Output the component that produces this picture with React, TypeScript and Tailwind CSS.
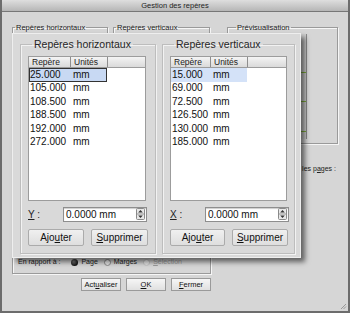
import React from "react";

const FONT = "font-['Liberation_Sans',Arial,sans-serif]";

const hRows = ["25.000", "105.000", "108.500", "188.500", "192.000", "272.000"];
const vRows = ["15.000", "69.000", "72.500", "126.500", "130.000", "185.000"];

function Spinner() {
  return (
    <svg width="9" height="12" viewBox="0 0 9 12" className="shrink-0">
      <rect x="0.5" y="0.5" width="8" height="11" rx="1" fill="#e8e8e8" stroke="#8a8a8a" />
      <line x1="1" y1="6" x2="8" y2="6" stroke="#9a9a9a" />
      <path d="M2.2 4.6 L4.5 2 L6.8 4.6 Z" fill="#333" />
      <path d="M2.2 7.4 L4.5 10 L6.8 7.4 Z" fill="#333" />
    </svg>
  );
}

function GuideList({
  rows,
  cols,
  focused,
}: {
  rows: string[];
  cols: [number, number, number];
  focused: boolean;
}) {
  const total = cols[0] + cols[1] + cols[2];
  return (
    <div className="flex flex-col" style={{ width: total }}>
      <div className="flex h-[12px] border border-[#9c9c9c] bg-gradient-to-b from-[#f4f4f4] to-[#dadada] text-[8.5px] leading-[10px] text-[#222]">
        <div className="border-r border-[#8e8e8e] pl-[3px]" style={{ width: cols[0] }}>
          Repère
        </div>
        <div className="border-r border-[#8e8e8e] pl-[3px]" style={{ width: cols[1] }}>
          Unités
        </div>
        <div className="flex-1" />
      </div>
      <div className="h-[133px] border-x border-b border-[#9c9c9c] bg-white text-[10px] text-[#111]">
        {rows.map((r, i) => {
          const sel = i === 0;
          return (
            <div key={r} className="flex h-[13.5px] items-center leading-[12px]">
              <div
                className={
                  sel
                    ? focused
                      ? "flex h-full items-center bg-[#c8d9f3] outline outline-1 -outline-offset-1 outline-[#333]"
                      : "flex h-full items-center bg-[#d4e2f8]"
                    : "flex h-full items-center"
                }
                style={{ width: cols[0] + cols[1] - 1 }}
              >
                <div className="pl-[1px]" style={{ width: cols[0] + 2 }}>
                  {r}
                </div>
                <div>mm</div>
              </div>
            </div>
          );
        })}
      </div>
    </div>
  );
}

function GuideGroup({
  title,
  rows,
  axis,
  focused,
  width,
  cols,
  btnW,
}: {
  title: string;
  rows: string[];
  axis: string;
  focused: boolean;
  width: number;
  cols: [number, number, number];
  btnW: [number, number];
}) {
  return (
    <fieldset
      className="h-[216px] border border-[#bdbdbd] shadow-[inset_1px_1px_0_#f2f2f2,1px_1px_0_#f2f2f2] pl-[7px]"
      style={{ width }}
    >
      <legend className="ml-[4px] px-[2px] text-[10.5px] leading-[12px] text-[#262626]">{title}</legend>
      <div className="mt-[6px]">
        <GuideList rows={rows} cols={cols} focused={focused} />
      </div>
      <div className="mt-[5px] flex h-[16px] items-center text-[10px]">
        <div className="w-[35px] text-[#222]">
          <span className="underline">{axis}</span> :
        </div>
        <div className="flex h-[15px] w-[84px] items-center justify-between border border-[#8e8e8e] bg-white pl-[2px] pr-[1px] text-[10px] text-[#111] shadow-[inset_0_1px_1px_rgba(0,0,0,0.2)]">
          <span>0.0000 mm</span>
          <Spinner />
        </div>
      </div>
      <div className="mt-[7px] flex gap-[7px] text-[10px] text-[#111]">
        <div
          className="flex h-[17px] items-center justify-center rounded-[2px] border border-[#ababab] bg-gradient-to-b from-[#f0f0f0] to-[#dedede]"
          style={{ width: btnW[0] }}
        >
          Ajo<span className="underline">u</span>ter
        </div>
        <div
          className="flex h-[17px] items-center justify-center rounded-[2px] border border-[#ababab] bg-gradient-to-b from-[#f0f0f0] to-[#dedede]"
          style={{ width: btnW[1] }}
        >
          <span className="underline">S</span>upprimer
        </div>
      </div>
    </fieldset>
  );
}

function BgGroup({
  title,
  className,
  children,
}: {
  title: string;
  className: string;
  children?: React.ReactNode;
}) {
  return (
    <fieldset
      className={
        "border border-[#9a9a9a] shadow-[inset_1px_1px_0_#f6f6f6,1px_1px_0_#f6f6f6] " + className
      }
    >
      <legend className="ml-[2px] px-[1px] text-[7.5px] leading-[9px] text-[#222]">{title}</legend>
      {children}
    </fieldset>
  );
}

function Radio({ state }: { state: "on" | "off" | "dis" }) {
  if (state === "on")
    return (
      <span className="inline-block h-[7px] w-[7px] rounded-full bg-[radial-gradient(circle_at_40%_35%,#777,#111_70%)]" />
    );
  return (
    <span
      className={
        "inline-block h-[7px] w-[7px] rounded-full border bg-gradient-to-b from-[#fafafa] to-[#dcdcdc] " +
        (state === "off" ? "border-[#8a8a8a]" : "border-[#c4c4c4]")
      }
    />
  );
}

export default function App() {
  return (
    <div
      className={
        "relative h-[313px] w-[350px] overflow-hidden border-x-2 border-b-2 border-[#6c6c6c] bg-[#d6d6d6] " +
        FONT
      }
    >
      {/* title bar */}
      <div className="flex h-[12px] items-center justify-center border-b border-[#777] bg-gradient-to-b from-[#dedede] to-[#b6b6b6] text-[7.5px] leading-[9px] text-[#1e1e1e]">
        Gestion des repères
      </div>

      {/* underlying dialog */}
      <div className="flex pl-[10px] pt-[11px]">
        <div className="flex w-[199px] flex-col">
          <div className="flex h-[227px] gap-[5px]">
            <BgGroup title="Repères horizontaux" className="h-[220px] w-[96px]" />
            <BgGroup title="Repères verticaux" className="h-[220px] w-[97px]" />
          </div>
          <div className="flex h-[24px] items-center gap-[6px] border border-[#9a9a9a] pl-[5px] text-[7px] text-[#222] shadow-[inset_1px_1px_0_#f6f6f6,1px_1px_0_#f6f6f6]">
            <span>En rapport à :</span>
            <span className="ml-[5px] flex items-center gap-[3px]">
              <Radio state="on" />
              Page
            </span>
            <span className="flex items-center gap-[3px]">
              <Radio state="off" />
              Marges
            </span>
            <span className="flex items-center gap-[3px] text-[#9a9a9a]">
              <Radio state="dis" />
              <span>
                <span className="underline">S</span>élection
              </span>
            </span>
          </div>
          <div className="mt-[4px] flex justify-end gap-[5px] text-[7.5px] text-[#111]">
            <div className="flex h-[13px] w-[40px] items-center justify-center border border-[#9a9a9a] bg-gradient-to-b from-[#f6f6f6] to-[#e0e0e0]">
              Act<span className="underline">u</span>aliser
            </div>
            <div className="flex h-[13px] w-[40px] items-center justify-center border border-[#9a9a9a] bg-gradient-to-b from-[#f6f6f6] to-[#e0e0e0]">
              <span className="underline">O</span>K
            </div>
            <div className="flex h-[13px] w-[40px] items-center justify-center border border-[#9a9a9a] bg-gradient-to-b from-[#f6f6f6] to-[#e0e0e0]">
              <span className="underline">F</span>ermer
            </div>
          </div>
        </div>
        <div className="ml-[16px] flex w-[111px] flex-col">
          <BgGroup title="Prévisualisation" className="h-[121px] w-[111px] pl-[6px]">
            <div className="mt-[2px] flex h-[105px] w-[73px] flex-col border-r border-[#8a8a8a] bg-[#cfcfcf]">
              <div className="mt-[38px] h-[1px] w-full bg-[#7fb03a]" />
              <div className="mt-[28px] h-[1px] w-full bg-[#7fb03a]" />
              <div className="mt-[29px] h-[1px] w-full bg-[#7fb03a]" />
            </div>
          </BgGroup>
          <div className="mt-[20px] pr-[2px] text-right text-[7px] text-[#222]">
            Appliquer à toutes les p<span className="underline">a</span>ges :
          </div>
        </div>
      </div>

      {/* floating panel */}
      <div className="absolute left-[10px] top-[33px] flex h-[225px] w-[289px] gap-[6px] border border-[#eeeeee] bg-[#d9d9d9] pl-[7px] pt-[4px] shadow-[4px_4px_5px_rgba(0,0,0,0.55)]">
        <GuideGroup
          title="Repères horizontaux"
          rows={hRows}
          axis="Y"
          focused
          width={136}
          cols={[42, 37, 39]}
          btnW={[56, 57]}
        />
        <GuideGroup
          title="Repères verticaux"
          rows={vRows}
          axis="X"
          focused={false}
          width={133}
          cols={[40, 37, 40]}
          btnW={[55, 56]}
        />
      </div>

      {/* resize grip */}
      <svg className="absolute bottom-[1px] right-[1px]" width="7" height="7" viewBox="0 0 7 7">
        <path d="M1 6 L6 1 M3.5 6 L6 3.5" stroke="#888" strokeWidth="0.8" />
      </svg>
    </div>
  );
}
